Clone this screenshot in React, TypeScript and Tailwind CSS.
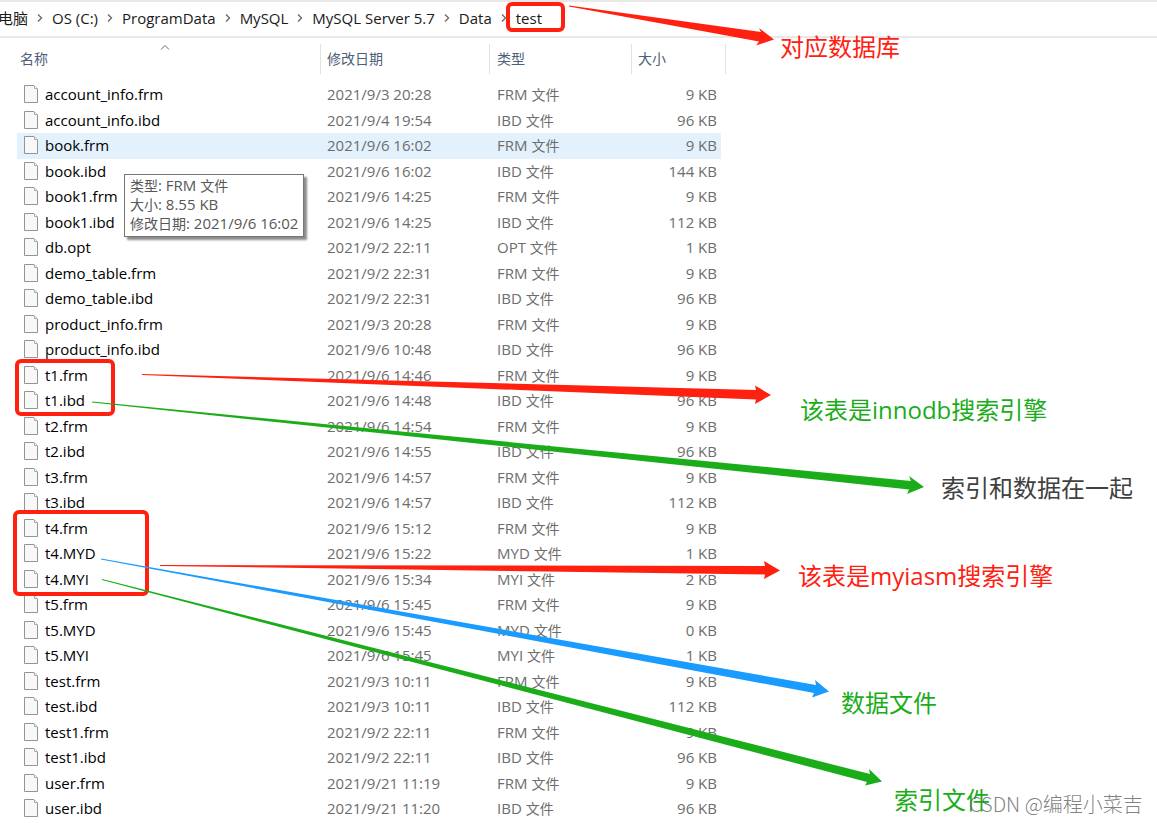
import React from "react";

type FileRow = { name: string; date: string; type: string; size: number };

const files: FileRow[] = [
  { name: "account_info.frm", date: "2021/9/3 20:28", type: "FRM", size: 9 },
  { name: "account_info.ibd", date: "2021/9/4 19:54", type: "IBD", size: 96 },
  { name: "book.frm", date: "2021/9/6 16:02", type: "FRM", size: 9 },
  { name: "book.ibd", date: "2021/9/6 16:02", type: "IBD", size: 144 },
  { name: "book1.frm", date: "2021/9/6 14:25", type: "FRM", size: 9 },
  { name: "book1.ibd", date: "2021/9/6 14:25", type: "IBD", size: 112 },
  { name: "db.opt", date: "2021/9/2 22:11", type: "OPT", size: 1 },
  { name: "demo_table.frm", date: "2021/9/2 22:31", type: "FRM", size: 9 },
  { name: "demo_table.ibd", date: "2021/9/2 22:31", type: "IBD", size: 96 },
  { name: "product_info.frm", date: "2021/9/3 20:28", type: "FRM", size: 9 },
  { name: "product_info.ibd", date: "2021/9/6 10:48", type: "IBD", size: 96 },
  { name: "t1.frm", date: "2021/9/6 14:46", type: "FRM", size: 9 },
  { name: "t1.ibd", date: "2021/9/6 14:48", type: "IBD", size: 96 },
  { name: "t2.frm", date: "2021/9/6 14:54", type: "FRM", size: 9 },
  { name: "t2.ibd", date: "2021/9/6 14:55", type: "IBD", size: 96 },
  { name: "t3.frm", date: "2021/9/6 14:57", type: "FRM", size: 9 },
  { name: "t3.ibd", date: "2021/9/6 14:57", type: "IBD", size: 112 },
  { name: "t4.frm", date: "2021/9/6 15:12", type: "FRM", size: 9 },
  { name: "t4.MYD", date: "2021/9/6 15:22", type: "MYD", size: 1 },
  { name: "t4.MYI", date: "2021/9/6 15:34", type: "MYI", size: 2 },
  { name: "t5.frm", date: "2021/9/6 15:45", type: "FRM", size: 9 },
  { name: "t5.MYD", date: "2021/9/6 15:45", type: "MYD", size: 0 },
  { name: "t5.MYI", date: "2021/9/6 15:45", type: "MYI", size: 1 },
  { name: "test.frm", date: "2021/9/3 10:11", type: "FRM", size: 9 },
  { name: "test.ibd", date: "2021/9/3 10:11", type: "IBD", size: 112 },
  { name: "test1.frm", date: "2021/9/2 22:11", type: "FRM", size: 9 },
  { name: "test1.ibd", date: "2021/9/2 22:11", type: "IBD", size: 96 },
  { name: "user.frm", date: "2021/9/21 11:19", type: "FRM", size: 9 },
  { name: "user.ibd", date: "2021/9/21 11:20", type: "IBD", size: 96 },
];

const crumbs = ["电脑", "OS (C:)", "ProgramData", "MySQL", "MySQL Server 5.7", "Data", "test"];

function FileIcon() {
  return (
    <svg width="14" height="18" viewBox="0 0 14 18" className="shrink-0" aria-hidden="true">
      <path d="M0.5 0.5H10L13.5 4V17.5H0.5Z" fill="#f8f8f8" stroke="#949494" />
      <path d="M10.5 1V3.5H13" fill="#ffffff" stroke="#a8a8a8" />
    </svg>
  );
}

function Breadcrumbs() {
  return (
    <nav
      aria-label="路径"
      className="flex h-[38px] items-center overflow-hidden border-t-2 border-b-2 border-[#e8e8e8] pb-[2px] text-[15px] text-[#1a1a1a]"
    >
      {crumbs.map((c, i) => (
        <React.Fragment key={c}>
          {i > 0 && (
            <svg viewBox="0 0 24 10" className="h-[10px] w-6 shrink-0" aria-hidden="true">
              <path d="M10 1.5L13.5 5L10 8.5" fill="none" stroke="#6b6b6b" strokeWidth="1.4" />
            </svg>
          )}
          <button type="button" className={i === 0 ? "-ml-[2px] whitespace-nowrap" : "whitespace-nowrap"}>
            {c}
          </button>
        </React.Fragment>
      ))}
    </nav>
  );
}

function HeaderCell({ label, className }: { label: string; className: string }) {
  return (
    <th scope="col" className="p-0 pt-[6px] align-top font-normal">
      <button
        type="button"
        className={`flex h-[30px] w-full items-center border-r border-[#e2e2e2] ${className}`}
      >
        {label}
      </button>
    </th>
  );
}

function FileTable() {
  return (
    <table className="ml-[17px] w-[709px] table-fixed border-collapse text-[15px] leading-5 text-[#6d6d6d]">
      <colgroup>
        <col className="w-[304px]" />
        <col className="w-[169px]" />
        <col className="w-[142px]" />
        <col className="w-[89px]" />
        <col className="w-[5px]" />
      </colgroup>
      <thead>
        <tr className="h-[44px] text-left text-sm text-[#4c607a]">
          <th scope="col" aria-sort="ascending" className="p-0 pt-[6px] align-top font-normal">
            <button type="button" className="grid h-[30px] w-full grid-cols-[1fr_auto_1fr] items-center border-r border-[#e2e2e2] pr-[10px] pl-[3px] text-left">
              <span>名称</span>
              <svg width="10" height="6" viewBox="0 0 10 6" className="self-start" aria-hidden="true">
                <path d="M1 5.5L5 1.5L9 5.5" fill="none" stroke="#6b6b6b" />
              </svg>
            </button>
          </th>
          <HeaderCell label="修改日期" className="pl-[6px]" />
          <HeaderCell label="类型" className="pl-[7px]" />
          <th scope="colgroup" colSpan={2} className="p-0 pt-[6px] align-top font-normal">
            <button type="button" className="flex h-[30px] w-full items-center border-r border-[#e2e2e2] pl-[6px]">
              大小
            </button>
          </th>
        </tr>
      </thead>
      <tbody>
        {files.map((f, i) => {
          const hover = f.name === "book.frm" ? "bg-[#e3f1fd]" : "";
          return (
            <tr key={f.name} className={i % 2 === 0 ? "h-[26px]" : "h-[25px]"}>
              <td className={`p-0 pb-[2px] pl-[7px] text-black ${hover}`}>
                <div className="flex items-center gap-[7px]">
                  <FileIcon />
                  <span>{f.name}</span>
                </div>
              </td>
              <td className={`p-0 pb-[2px] pl-[6px] ${hover}`}>{f.date}</td>
              <td className={`p-0 pb-[2px] pl-[7px] ${hover}`}>
                {f.type} <span className="text-sm leading-4">文件</span>
              </td>
              <td className={`p-0 pr-[4px] pb-[2px] text-right ${hover}`}>{f.size} KB</td>
              <td className="p-0" />
            </tr>
          );
        })}
      </tbody>
    </table>
  );
}

const arrows = [
  { color: "#ff2010", points: "569,5.5 761,32 759,28 774,39.5 756,45.5 759,41.5 569,6.5" },
  { color: "#ff2010", points: "142,374 756,390 755,385.5 771,395 755,404 756,399.5 142,375" },
  { color: "#1aad19", points: "92,401.5 911,481 909,476 924,487 907,494 909,489.5 92,402.5" },
  { color: "#ff2010", points: "160,565 765,566 764,561 780,570.5 764,579 765,574.5 160,566" },
  { color: "#1a9bff", points: "101,558.5 816,685 815,680 829,691.5 812,697.5 814,693 101,559.5" },
  { color: "#1aad19", points: "102,579 870,774 869,769 882,781.5 865,785.5 867,782 102,580" },
];

function Annotations() {
  return (
    <>
      <div className="absolute top-[2px] left-[506px] h-[30px] w-[59px] rounded-md border-4 border-[#ff2010]" />
      <div className="absolute top-[359px] left-[15px] h-[57px] w-[100px] rounded-md border-4 border-[#ff2010]" />
      <div className="absolute top-[510px] left-[13px] h-[86px] w-[136px] rounded-md border-4 border-[#ff2010]" />
      <svg
        width="1157"
        height="823"
        viewBox="0 0 1157 823"
        className="pointer-events-none absolute top-0 left-0 max-w-none"
        aria-hidden="true"
      >
        {arrows.map((a) => (
          <polygon key={a.points} points={a.points} fill={a.color} />
        ))}
      </svg>
      <div className="text-2xl whitespace-nowrap">
        <p className="absolute top-[31px] left-[780px] text-[#ff2010]">对应数据库</p>
        <p className="absolute top-[394px] left-[800px] text-[#1aad19]">该表是innodb搜索引擎</p>
        <p className="absolute top-[472px] left-[941px] text-[#404040]">索引和数据在一起</p>
        <p className="absolute top-[560px] left-[798px] text-[#ff2010]">该表是myiasm搜索引擎</p>
        <p className="absolute top-[687px] left-[841px] text-[#1aad19]">数据文件</p>
        <p className="absolute top-[784px] left-[894px] text-[#1aad19]">索引文件</p>
      </div>
    </>
  );
}

export default function App() {
  return (
    <main className="relative min-h-screen overflow-hidden bg-white font-['Open_Sans','Noto_Sans_CJK_SC',sans-serif]">
      <Breadcrumbs />
      <FileTable />
      <div
        role="tooltip"
        className="absolute top-[174px] left-[124px] border border-[#767676] bg-white px-[5px] pt-px pb-[3px] text-[15px] leading-[19px] whitespace-nowrap text-[#575757] shadow-[3px_3px_2px_rgba(0,0,0,0.45)]"
      >
        <p>
          <span className="text-sm leading-4">类型</span>: FRM <span className="text-sm leading-4">文件</span>
        </p>
        <p>
          <span className="text-sm leading-4">大小</span>: 8.55 KB
        </p>
        <p>
          <span className="text-sm leading-4">修改日期</span>: 2021/9/6 16:02
        </p>
      </div>
      <Annotations />
      <p className="absolute top-[790px] left-[969px] font-['Noto_Sans_CJK_SC',sans-serif] text-xl leading-7 font-light whitespace-nowrap text-[#606060]/80">
        CSDN @编程小菜吉
      </p>
    </main>
  );
}
